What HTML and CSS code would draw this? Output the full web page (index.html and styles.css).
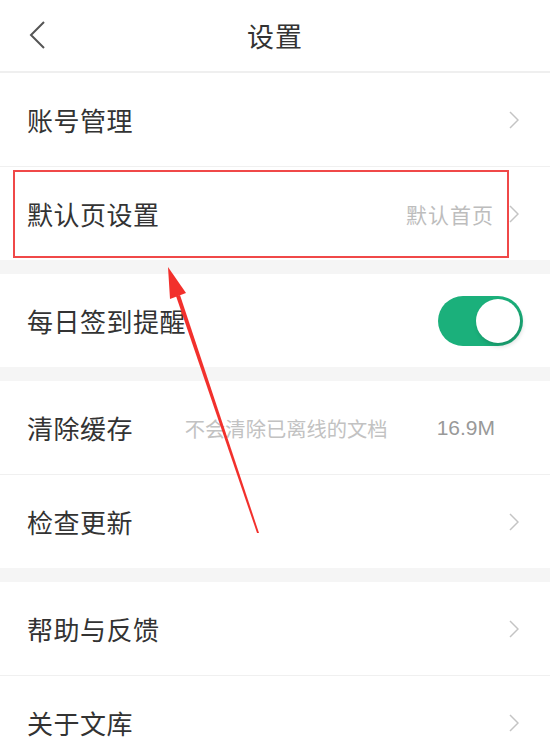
FILE: index.html
```html
<!DOCTYPE html>
<html lang="zh-CN">
<head>
<meta charset="utf-8">
<title>设置</title>
<link rel="stylesheet" href="styles.css">
</head>
<body>
<div class="page">
  <header class="topbar">
    <svg class="back" width="20" height="30" viewBox="0 0 20 30"><polyline points="16,2 3,15 16,28" fill="none" stroke="#555" stroke-width="2"/></svg>
    <h1 class="title">设置</h1>
  </header>

  <section class="group">
    <div class="row"><span class="label">账号管理</span><svg class="chev" width="10" height="18" viewBox="0 0 10 18"><polyline points="1,1 9,9 1,17" fill="none" stroke="#c4c4c4" stroke-width="1.5"/></svg></div>
    <div class="row marked"><span class="label">默认页设置</span><span class="value">默认首页</span><svg class="chev" width="10" height="18" viewBox="0 0 10 18"><polyline points="1,1 9,9 1,17" fill="none" stroke="#c4c4c4" stroke-width="1.5"/></svg><span class="mark"></span></div>
  </section>

  <section class="group">
    <div class="row"><span class="label">每日签到提醒</span><span class="toggle"><span class="knob"></span></span></div>
  </section>

  <section class="group">
    <div class="row"><span class="label">清除缓存</span><span class="hint">不会清除已离线的文档</span><span class="size">16.9M</span></div>
    <div class="row"><span class="label">检查更新</span><svg class="chev" width="10" height="18" viewBox="0 0 10 18"><polyline points="1,1 9,9 1,17" fill="none" stroke="#c4c4c4" stroke-width="1.5"/></svg></div>
  </section>

  <section class="group">
    <div class="row"><span class="label">帮助与反馈</span><svg class="chev" width="10" height="18" viewBox="0 0 10 18"><polyline points="1,1 9,9 1,17" fill="none" stroke="#c4c4c4" stroke-width="1.5"/></svg></div>
    <div class="row"><span class="label">关于文库</span><svg class="chev" width="10" height="18" viewBox="0 0 10 18"><polyline points="1,1 9,9 1,17" fill="none" stroke="#c4c4c4" stroke-width="1.5"/></svg></div>
  </section>

  <svg class="arrow" width="550" height="743" viewBox="0 0 550 743">
    <polygon points="176,296 180,295 259,533 257,533" fill="#f2302c"/>
    <polygon points="168,267 186,293 170,299" fill="#f2302c"/>
  </svg>
</div>
</body>
</html>
```

FILE: styles.css
```css
html, body {
  margin: 0;
  padding: 0;
  background: #f5f5f5;
}
body {
  font-family: "Noto Sans CJK SC", "Noto Sans", sans-serif;
  color: #333;
}
.page {
  position: relative;
  width: 550px;
  height: 743px;
  overflow: hidden;
  background: #f5f5f5;
}
.topbar {
  height: 71px;
  background: #fff;
  border-bottom: 2px solid #efefef;
  display: flex;
  align-items: center;
  justify-content: center;
  position: relative;
}
.back {
  position: absolute;
  left: 28px;
  top: 20px;
}
.title {
  margin: 0;
  font-size: 27px;
  font-weight: 400;
  color: #333;
  letter-spacing: 1px;
}
.group {
  background: #fff;
  margin-bottom: 14px;
}
.row {
  height: 93px;
  display: flex;
  align-items: center;
  padding: 0 30px 0 27px;
  position: relative;
}
.row + .row {
  border-top: 1px solid #f0f0f0;
}
.label {
  font-size: 26px;
  flex: 1;
  letter-spacing: 0.5px;
}
.value {
  font-size: 21px;
  color: #bdbdbd;
  margin-right: 15px;
  letter-spacing: 1px;
}
.chev {
  display: block;
  margin-right: 1px;
}
.hint {
  font-size: 20.3px;
  color: #c2c2c2;
  margin-right: 49px;
}
.size {
  font-size: 21px;
  color: #999;
  font-family: "Liberation Sans", Arial, sans-serif;
  margin-right: 25px;
}
.toggle {
  width: 85px;
  height: 50px;
  border-radius: 25px;
  background: #1bb07b;
  position: relative;
  margin-right: -3px;
}
.knob {
  position: absolute;
  right: 3px;
  top: 3px;
  width: 44px;
  height: 44px;
  border-radius: 50%;
  background: #fff;
  box-shadow: 2px 3px 5px rgba(0, 0, 0, 0.18);
}
.mark {
  position: absolute;
  left: 13px;
  right: 41px;
  top: 3px;
  bottom: 2px;
  border: 2px solid #f04848;
  pointer-events: none;
}
.arrow {
  position: absolute;
  left: 0;
  top: 0;
  pointer-events: none;
}
```
